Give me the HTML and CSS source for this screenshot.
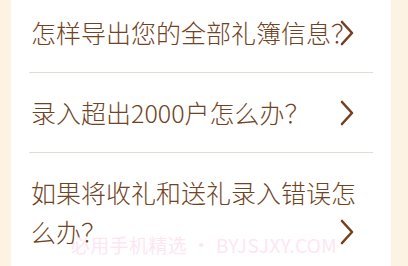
FILE: index.html
```html
<!DOCTYPE html>
<html lang="zh">
<head>
<meta charset="utf-8">
<link rel="stylesheet" href="styles.css">
</head>
<body>
<div class="page">
  <div class="panel">
    <div class="item first">
      <div class="q">怎样导出您的全部礼簿信息？</div>
      <svg class="chev" width="14" height="26" viewBox="0 0 14 26"><polyline points="2,2 12,13 2,24" fill="none" stroke="#74411f" stroke-width="2.6" stroke-linecap="round" stroke-linejoin="round"/></svg>
    </div>
    <div class="item">
      <div class="q">录入超出2000户怎么办？</div>
      <svg class="chev" width="14" height="26" viewBox="0 0 14 26"><polyline points="2,2 12,13 2,24" fill="none" stroke="#74411f" stroke-width="2.6" stroke-linecap="round" stroke-linejoin="round"/></svg>
    </div>
    <div class="item">
      <div class="q">如果将收礼和送礼录入错误怎么办？</div>
      <svg class="chev" width="14" height="26" viewBox="0 0 14 26"><polyline points="2,2 12,13 2,24" fill="none" stroke="#74411f" stroke-width="2.6" stroke-linecap="round" stroke-linejoin="round"/></svg>
    </div>
  </div>
  <div class="watermark">必用手机精选 • BYJSJXY.COM</div>
</div>
</body>
</html>
```
FILE: styles.css
```css
html, body {
  margin: 0;
  padding: 0;
  background: #fcf3e2;
}
body {
  width: 408px;
  height: 266px;
  overflow: hidden;
}
.page {
  position: relative;
  width: 408px;
  height: 266px;
  padding: 0 17px 0 11px;
  box-sizing: border-box;
  overflow: hidden;
}
.panel {
  background: #ffffff;
  height: 100%;
  padding: 0 18px;
  box-sizing: border-box;
}
.item {
  position: relative;
  padding: 20px 0 20px 2px;
  border-bottom: 1px solid #e3dbd3;
}
.item.first {
  padding-top: 13px;
}
.q {
  font-family: "Noto Sans CJK SC", "Noto Sans", sans-serif;
  font-size: 25px;
  line-height: 39px;
  color: #6f4324;
  font-weight: 300;
}
.chev {
  position: absolute;
  right: 19px;
  bottom: 26px;
}
.watermark {
  position: absolute;
  left: 0;
  right: 0;
  top: 233px;
  text-align: center;
  font-family: "Noto Sans CJK SC", "Liberation Sans", sans-serif;
  font-size: 19px;
  line-height: 24px;
  letter-spacing: 0.4px;
  color: #fde6f4;
}
```
